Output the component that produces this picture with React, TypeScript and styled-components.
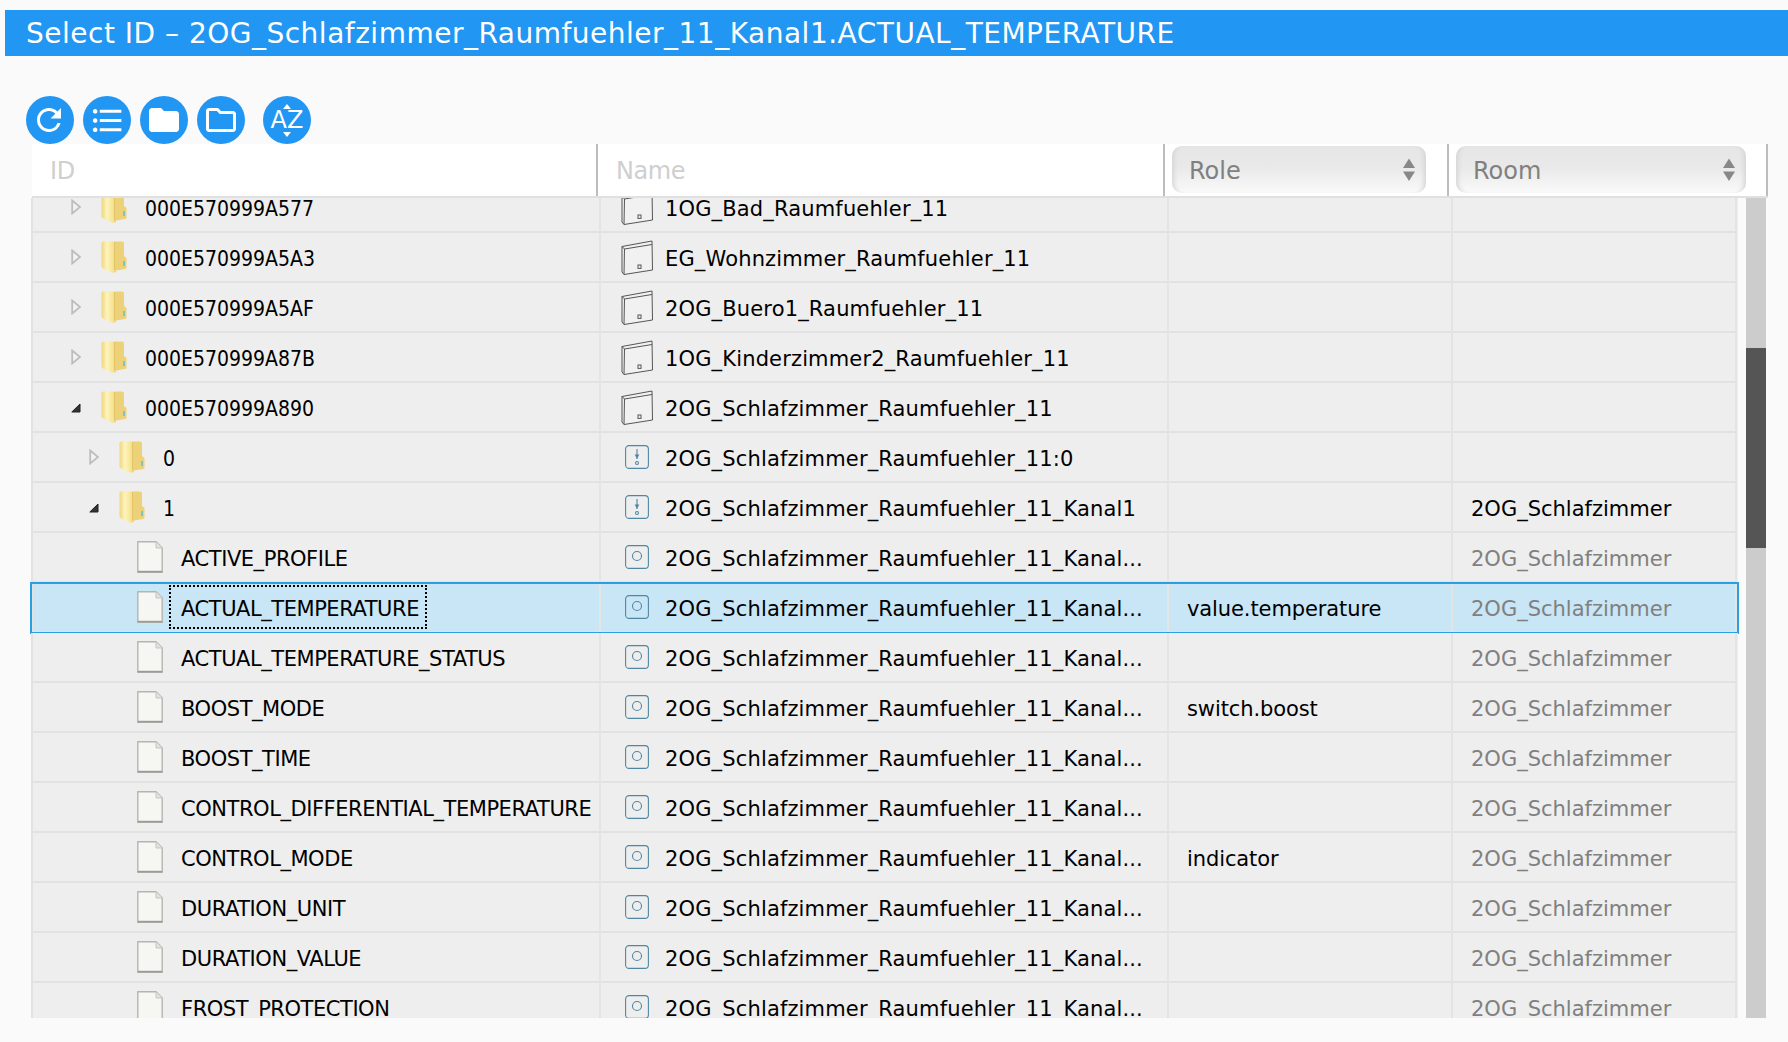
import styled, { createGlobalStyle } from 'styled-components';
import { MdFolder, MdFormatListBulleted, MdOutlineFolder, MdRefresh } from 'react-icons/md';

type Kind = 'device' | 'channel' | 'state';

interface TreeRow {
  id: string;
  name: string;
  kind: Kind;
  depth: number;
  open?: boolean;
  role?: string;
  room?: string;
  roomOwn?: boolean;
  selected?: boolean;
}

const KANAL = '2OG_Schlafzimmer_Raumfuehler_11_Kanal...';
const ROOM = '2OG_Schlafzimmer';

const stateRow = (id: string, role?: string, selected?: boolean): TreeRow => ({
  id,
  name: KANAL,
  kind: 'state',
  depth: 2,
  role,
  room: ROOM,
  selected,
});

const rows: TreeRow[] = [
  { id: '000E570999A577', name: '1OG_Bad_Raumfuehler_11', kind: 'device', depth: 0 },
  { id: '000E570999A5A3', name: 'EG_Wohnzimmer_Raumfuehler_11', kind: 'device', depth: 0 },
  { id: '000E570999A5AF', name: '2OG_Buero1_Raumfuehler_11', kind: 'device', depth: 0 },
  { id: '000E570999A87B', name: '1OG_Kinderzimmer2_Raumfuehler_11', kind: 'device', depth: 0 },
  { id: '000E570999A890', name: '2OG_Schlafzimmer_Raumfuehler_11', kind: 'device', depth: 0, open: true },
  { id: '0', name: '2OG_Schlafzimmer_Raumfuehler_11:0', kind: 'channel', depth: 1 },
  {
    id: '1',
    name: '2OG_Schlafzimmer_Raumfuehler_11_Kanal1',
    kind: 'channel',
    depth: 1,
    open: true,
    room: ROOM,
    roomOwn: true,
  },
  stateRow('ACTIVE_PROFILE'),
  stateRow('ACTUAL_TEMPERATURE', 'value.temperature', true),
  stateRow('ACTUAL_TEMPERATURE_STATUS'),
  stateRow('BOOST_MODE', 'switch.boost'),
  stateRow('BOOST_TIME'),
  stateRow('CONTROL_DIFFERENTIAL_TEMPERATURE'),
  stateRow('CONTROL_MODE', 'indicator'),
  stateRow('DURATION_UNIT'),
  stateRow('DURATION_VALUE'),
  stateRow('FROST_PROTECTION'),
];

function Expander({ open }: { open?: boolean }) {
  return (
    <ExpanderSvg viewBox="0 0 10 16">
      {open ? (
        <path d="M0.8 13 L9 5 L9 13 Z" fill="#333" stroke="#222" strokeWidth="1" />
      ) : (
        <path d="M1.2 1.5 L9 8 L1.2 14.5 Z" fill="#f2f2f2" stroke="#bdbdbd" strokeWidth="1.8" />
      )}
    </ExpanderSvg>
  );
}

function FolderIcon() {
  return (
    <TreeIconSvg viewBox="0 0 26 32">
      <defs>
        <linearGradient id="folderGrad" x1="0" y1="0" x2="1" y2="0">
          <stop offset="0" stopColor="#efd680" />
          <stop offset="0.22" stopColor="#fdf4bd" />
          <stop offset="0.48" stopColor="#f5e08e" />
          <stop offset="0.55" stopColor="#ecd178" />
          <stop offset="1" stopColor="#ecd27a" />
        </linearGradient>
      </defs>
      <path
        d="M0.5 2 Q0.5 0.5 2 0.5 L21 0.5 Q23 0.5 23 2.5 L23 15 L25.5 17 L25.5 26.5 Q25.5 28 24 28 L15 29.5 L15 31 Q12 32.5 9.5 31 L2 27.5 Q0.5 26.5 0.5 25 Z"
        fill="url(#folderGrad)"
      />
      <path d="M13.5 1 L13.5 29" stroke="#d9b955" strokeWidth="1" opacity="0.6" />
      <rect x="22" y="20" width="2" height="5" fill="#7cc6c9" />
    </TreeIconSvg>
  );
}

function FileIcon() {
  return (
    <TreeIconSvg viewBox="0 0 26 32">
      <path d="M0.8 0.8 L19 0.8 L25.2 7 L25.2 31.2 L0.8 31.2 Z" fill="#f6f7f2" stroke="#b4b4b0" strokeWidth="1.4" />
      <path d="M19 0.8 L19 7 L25.2 7" fill="#e3e3de" stroke="#c4c4c0" strokeWidth="1" />
      <path d="M0.8 30.6 L25.2 30.6" stroke="#9a9a96" strokeWidth="1.6" />
    </TreeIconSvg>
  );
}

function KindIcon({ kind }: { kind: Kind }) {
  if (kind === 'device') {
    return (
      <DeviceSvg viewBox="0 0 32 35" fill="none" stroke="#555" strokeWidth="1">
        <path d="M1 6.5 L31 1 L31.5 30 L3 34.5 L1 32 Z" fill="#f1f1f1" />
        <path d="M1 6.5 L3.5 9 L31 4.5" />
        <path d="M3.5 9 L3 34.5" />
        <rect x="17" y="25" width="3" height="3.4" />
      </DeviceSvg>
    );
  }
  return (
    <SmallIconSvg viewBox="0 0 24 24" fill="none" stroke="#4f87a3" strokeWidth="1.1">
      <rect x="0.6" y="0.6" width="22.8" height="22.8" rx="3.5" />
      {kind === 'channel' ? (
        <>
          <path d="M12 4 L12 14" />
          <path d="M10.6 10 L13.4 10 L12 12.5 Z" fill="#4f87a3" />
          <circle cx="12" cy="18" r="1.5" />
        </>
      ) : (
        <circle cx="12" cy="11" r="4.5" />
      )}
    </SmallIconSvg>
  );
}

function SelectArrows() {
  return (
    <ArrowsSvg viewBox="0 0 12 24">
      <path d="M6 1 L12 10.5 L0 10.5 Z M0 14 L12 14 L6 23.5 Z" fill="#888" />
    </ArrowsSvg>
  );
}

export default function App() {
  return (
    <>
      <GlobalStyle />
      <Page>
        <TitleBar>Select ID – 2OG_Schlafzimmer_Raumfuehler_11_Kanal1.ACTUAL_TEMPERATURE</TitleBar>

        <Toolbar>
          <RoundButton>
            <RefreshIcon size={36} />
          </RoundButton>
          <RoundButton>
            <MdFormatListBulleted size={37} />
          </RoundButton>
          <RoundButton>
            <MdFolder size={36} />
          </RoundButton>
          <RoundButton>
            <MdOutlineFolder size={36} />
          </RoundButton>
          <SortButton>
            <SortArrow viewBox="0 0 10 6">
              <path d="M5 0 L10 6 L0 6 Z" fill="#fff" />
            </SortArrow>
            <SortLetters>AZ</SortLetters>
            <SortArrow viewBox="0 0 10 6">
              <path d="M0 0 L10 0 L5 6 Z" fill="#fff" />
            </SortArrow>
          </SortButton>
        </Toolbar>

        <TableHeader>
          <HeaderCell>ID</HeaderCell>
          <HeaderCell>Name</HeaderCell>
          <HeaderSelectCell>
            <FilterSelect>
              Role
              <SelectArrows />
            </FilterSelect>
          </HeaderSelectCell>
          <HeaderSelectCell>
            <FilterSelect>
              Room
              <SelectArrows />
            </FilterSelect>
          </HeaderSelectCell>
        </TableHeader>

        <TableBody>
          <RowList>
            {rows.map((row) => (
              <Row key={row.id} $selected={row.selected}>
                <IdCell $depth={row.depth}>
                  <ExpanderSlot>{row.kind !== 'state' && <Expander open={row.open} />}</ExpanderSlot>
                  {row.kind === 'state' ? <FileIcon /> : <FolderIcon />}
                  <IdText $focused={row.selected} $state={row.kind === 'state'}>
                    {row.id}
                  </IdText>
                </IdCell>
                <NameCell>
                  <IconSlot>
                    <KindIcon kind={row.kind} />
                  </IconSlot>
                  <NameText>{row.name}</NameText>
                </NameCell>
                <RoleCell>{row.role}</RoleCell>
                <RoomCell $own={row.roomOwn}>{row.room}</RoomCell>
              </Row>
            ))}
          </RowList>
          <ScrollTrack>
            <ScrollThumb />
          </ScrollTrack>
        </TableBody>
      </Page>
    </>
  );
}

const GlobalStyle = createGlobalStyle`
  html, body {
    margin: 0;
    padding: 0;
    background: #fafafa;
  }
`;

const Page = styled.div`
  width: 1788px;
  height: 1042px;
  overflow: hidden;
  padding-top: 10px;
  box-sizing: border-box;
  background: #fafafa;
  font-family: 'DejaVu Sans', 'Noto Sans', sans-serif;
  color: #000;
`;

const TitleBar = styled.div`
  margin-left: 5px;
  height: 46px;
  line-height: 48px;
  padding-left: 21px;
  background: #2196f3;
  color: #fff;
  font-size: 28px;
  letter-spacing: 0.5px;
  white-space: nowrap;
`;

const Toolbar = styled.div`
  display: flex;
  gap: 9px;
  margin: 40px 0 0 26px;
  height: 48px;
`;

const RoundButton = styled.div`
  width: 48px;
  height: 48px;
  border-radius: 50%;
  background: #2196f3;
  color: #fff;
  display: flex;
  align-items: center;
  justify-content: center;
`;

const RefreshIcon = styled(MdRefresh)`
  margin-right: 2px;
`;

const SortButton = styled(RoundButton)`
  margin-left: 9px;
  flex-direction: column;
  gap: 0;
`;

const SortLetters = styled.span`
  font-size: 24px;
  line-height: 23px;
`;

const SortArrow = styled.svg`
  width: 8px;
  height: 5px;
`;

const TableHeader = styled.div`
  display: grid;
  grid-template-columns: 566px 567px 284px 319px;
  margin-left: 32px;
  width: 1736px;
  height: 54px;
  box-sizing: border-box;
  background: #fff;
  border-bottom: 2px solid #e0e0e0;
`;

const HeaderCell = styled.div`
  display: flex;
  align-items: center;
  padding: 2px 0 0 18px;
  border-right: 2px solid #bdbdbd;
  color: #cfcfcf;
  font-size: 24px;
  letter-spacing: -0.4px;
`;

const HeaderSelectCell = styled.div`
  padding: 2px 0 0 7px;
  border-right: 2px solid #bdbdbd;
`;

const FilterSelect = styled.div`
  width: 254px;
  height: 47px;
  box-sizing: border-box;
  display: flex;
  align-items: center;
  justify-content: space-between;
  padding: 2px 11px 0 17px;
  border-radius: 10px;
  background: linear-gradient(#e6e6e6, #e9e9e9 45%, #fafafa);
  box-shadow: inset 6px 0 5px -4px #d4d4d4, inset -6px 0 5px -4px #d4d4d4;
  color: #808080;
  font-size: 24px;

  ${HeaderSelectCell}:last-child & {
    width: 290px;
  }
`;

const ArrowsSvg = styled.svg`
  width: 12px;
  height: 25px;
  margin-top: -2px;
`;

const TableBody = styled.div`
  display: flex;
  height: 820px;
  overflow: hidden;
  margin-left: 30px;
  width: 1736px;
`;

const RowList = styled.div`
  width: 1707px;
  margin-top: -15px;
  padding-left: 1px;
  margin-right: 8px;
`;

const Row = styled.div<{ $selected?: boolean }>`
  display: grid;
  grid-template-columns: 570px 568px 284px 284px;
  height: 50px;
  box-sizing: border-box;
  background: ${(p) => (p.$selected ? '#c8e6f6' : '#eeeeee')};
  outline: ${(p) => (p.$selected ? '2px solid #29a0e0' : 'none')};
  outline-offset: -1px;
  position: relative;
  font-size: 21px;
  letter-spacing: 0.15px;
  white-space: nowrap;
`;

const Cell = styled.div`
  display: flex;
  align-items: center;
  min-width: 0;
  box-sizing: border-box;
  border-bottom: 2px solid #e2e2e2;
  border-right: 2px solid #e4e4e4;
`;

const IdCell = styled(Cell)<{ $depth: number }>`
  padding-left: ${(p) => 38 + p.$depth * 18}px;
  border-left: 2px solid #e2e2e2;
`;

const ExpanderSlot = styled.span`
  width: 30px;
  flex-shrink: 0;
  display: flex;
  align-items: center;
`;

const ExpanderSvg = styled.svg`
  width: 10px;
  height: 16px;
`;

const TreeIconSvg = styled.svg`
  width: 26px;
  height: 32px;
  flex-shrink: 0;
`;

const IdText = styled.span<{ $focused?: boolean; $state?: boolean }>`
  margin-left: 6px;
  padding: 4px 6px 0 10px;
  height: 44px;
  box-sizing: border-box;
  line-height: 36px;
  border: 2px dotted ${(p) => (p.$focused ? '#000' : 'transparent')};
  font-stretch: ${(p) => (p.$state ? 'normal' : 'condensed')};
  letter-spacing: ${(p) => (p.$state ? '-0.45px' : '0')};
`;

const NameCell = styled(Cell)`
  padding-left: 20px;
`;

const NameText = styled.span`
  padding-top: 3px;
`;

const IconSlot = styled.span`
  width: 44px;
  flex-shrink: 0;
  display: flex;
  justify-content: center;
  padding-right: 12px;
  box-sizing: border-box;
`;

const DeviceSvg = styled.svg`
  width: 32px;
  height: 35px;
`;

const SmallIconSvg = styled.svg`
  width: 24px;
  height: 24px;
`;

const RoleCell = styled(Cell)`
  padding: 3px 0 0 18px;
  letter-spacing: -0.1px;
`;

const RoomCell = styled(Cell)<{ $own?: boolean }>`
  padding: 3px 0 0 18px;
  letter-spacing: 0;
  color: ${(p) => (p.$own ? '#000' : '#808080')};
`;

const ScrollTrack = styled.div`
  width: 20px;
  height: 820px;
  flex-shrink: 0;
  background: #cccccc;
`;

const ScrollThumb = styled.div`
  margin-top: 150px;
  height: 200px;
  background: #555555;
`;
